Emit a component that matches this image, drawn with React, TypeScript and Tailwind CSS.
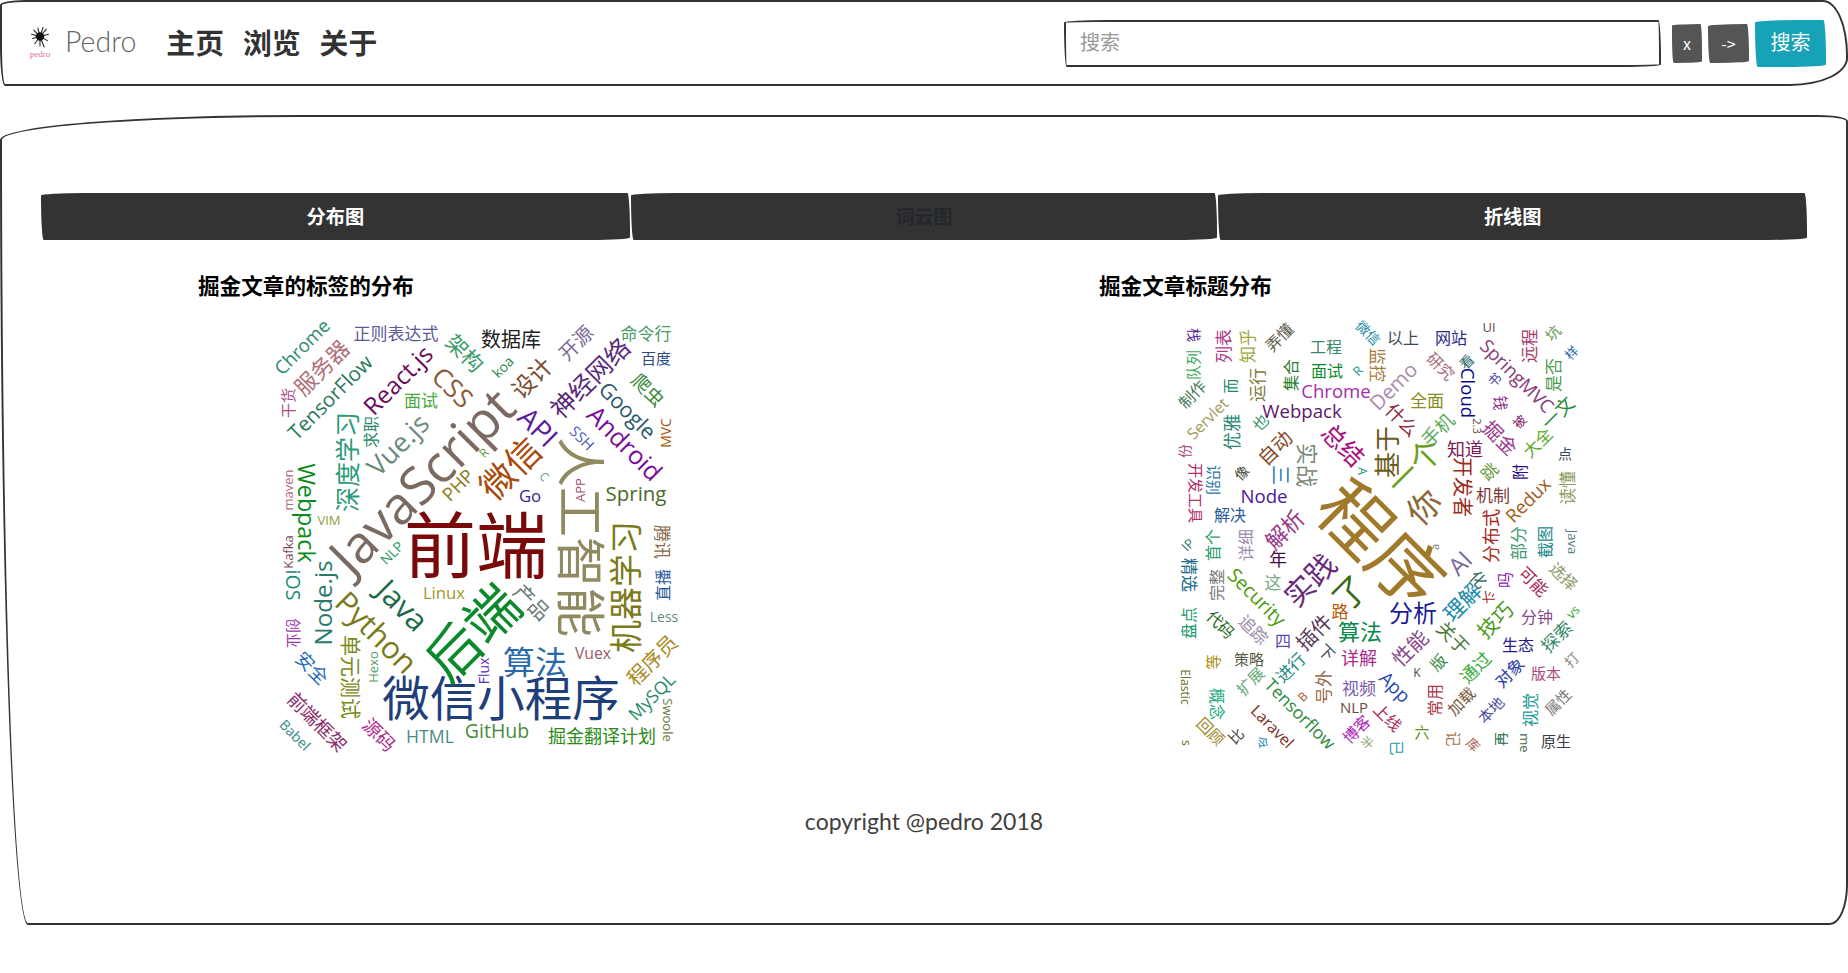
type Word = [string, number, number, number, number, string];

// text, center x, center y (page coords), font size, rotation, colour
const tagWords: Word[] = [
  ['JavaScript', 421, 480, 56, -45, '#7a6a62'],
  ['前端', 476, 544, 72, 0, '#7a0a0a'],
  ['人工智能', 581, 537, 50, 90, '#8f8a5f'],
  ['微信小程序', 501, 698, 47.5, 0, '#1f3f7a'],
  ['后端', 472, 632, 54, -45, '#0a8a2a'],
  ['微信', 510, 468, 38, -45, '#a84a0a'],
  ['机器学习', 625, 587, 33, -90, '#7a7a1a'],
  ['算法', 535, 662, 32, 0, '#2a6aaa'],
  ['Java', 403, 605, 33, 45, '#1a6a4a'],
  ['Python', 377, 632, 33, 45, '#7a7a1a'],
  ['Vue.js', 398, 445, 29, -45, '#6a8a7a'],
  ['React.js', 398, 380, 26, -45, '#6a0a5a'],
  ['CSS', 453, 387, 28, 45, '#8a5a3a'],
  ['API', 538, 427, 30, 45, '#5a1a9a'],
  ['神经网络', 590, 378, 27, -45, '#5a2a7a'],
  ['设计', 532, 378, 25, -45, '#7a4a2a'],
  ['Android', 625, 443, 27, 45, '#7a0a9a'],
  ['Google', 628, 410, 23, 45, '#2a5a6a'],
  ['Node.js', 323, 603, 26, -90, '#2a7a6a'],
  ['Webpack', 306, 513, 25, 90, '#0a8a1a'],
  ['深度学习', 347, 462, 25, -90, '#2a9a7a'],
  ['TensorFlow', 330, 397, 22, -45, '#2a7a5a'],
  ['服务器', 322, 368, 24, -45, '#b0707a'],
  ['Chrome', 302, 347, 20, -45, '#2a8a6a'],
  ['正则表达式', 396, 333, 17, 0, '#5a5a9a'],
  ['架构', 465, 353, 23, 45, '#3a9a6a'],
  ['数据库', 511, 340, 20, 0, '#222222'],
  ['开源', 576, 343, 21, -45, '#7a6a9a'],
  ['命令行', 646, 333, 17, 0, '#4a9a6a'],
  ['百度', 656, 358, 15, 0, '#2a4a8a'],
  ['面试', 421, 400, 17, 0, '#4aaa3a'],
  ['koa', 503, 367, 15, -45, '#2a8a4a'],
  ['爬虫', 648, 390, 20, 45, '#3a8a3a'],
  ['干货', 288, 403, 15, -90, '#b04a8a'],
  ['求职', 371, 432, 16, -90, '#2a8a6a'],
  ['SSH', 582, 438, 16, 45, '#4a5abf'],
  ['MVC', 666, 433, 15, -90, '#a85a0a'],
  ['R', 484, 453, 13, -45, '#6a9a3a'],
  ['PHP', 458, 485, 20, -45, '#8a7a1a'],
  ['C', 544, 477, 13, 45, '#6a9a8a'],
  ['Go', 530, 496, 18, 0, '#3a1a8a'],
  ['APP', 581, 490, 14, -90, '#a84a6a'],
  ['Spring', 636, 493, 22, 0, '#4a6a2a'],
  ['maven', 289, 490, 14, -90, '#b06a7a'],
  ['VIM', 329, 521, 14, 0, '#8aa03a'],
  ['Kafka', 289, 552, 14, -90, '#7a4a5a'],
  ['iOS', 293, 585, 21, 90, '#1a8a7a'],
  ['NLP', 392, 553, 15, -45, '#2a9a6a'],
  ['Linux', 444, 593, 18, 0, '#a09a2a'],
  ['产品', 532, 602, 22, 45, '#6a7a7a'],
  ['腾讯', 662, 542, 17, 90, '#8a6a4a'],
  ['直播', 663, 585, 16, -90, '#2a5a9a'],
  ['Less', 664, 617, 15, 0, '#5a8a7a'],
  ['程序员', 652, 660, 22, -45, '#a88a1a'],
  ['Vuex', 593, 654, 17, 0, '#9a5a6a'],
  ['创业', 293, 633, 15, 90, '#9a3aaa'],
  ['安全', 312, 668, 20, 45, '#2a6aba'],
  ['单元测试', 350, 677, 21, 90, '#7a8a1a'],
  ['Hexo', 374, 667, 14, -90, '#5a9a6a'],
  ['Flux', 484, 671, 15, -90, '#5a2aba'],
  ['MySQL', 652, 697, 19, -45, '#2a8a6a'],
  ['Swoole', 667, 720, 14, 90, '#6a7a3a'],
  ['前端框架', 317, 722, 20, 45, '#8a2a6a'],
  ['Babel', 295, 735, 15, 45, '#3a8a8a'],
  ['源码', 379, 735, 20, 45, '#b02a8a'],
  ['HTML', 430, 737, 19, 0, '#4a8a8a'],
  ['GitHub', 497, 731, 21, 0, '#4a8a3a'],
  ['掘金翻译计划', 602, 736, 18, 0, '#2a8a1a'],
];

const titleWords: Word[] = [
  ['程序', 1382, 543, 72, 45, '#a07a2a'],
  ['一个', 1414, 466, 34, -45, '#6aa01a'],
  ['你', 1424, 507, 36, -45, '#8a6a3a'],
  ['了', 1350, 593, 36, -45, '#3a6a1a'],
  ['实践', 1310, 580, 32, -45, '#6a2a7a'],
  ['基于', 1387, 452, 26, -90, '#6a5a1a'],
  ['总结', 1343, 445, 26, 45, '#aa0a7a'],
  ['AI', 1460, 563, 26, -45, '#7a6a9a'],
  ['理解', 1462, 602, 23, -45, '#1a8aaa'],
  ['解析', 1285, 530, 24, -45, '#9a3a8a'],
  ['分析', 1413, 613, 24, 0, '#1a1a9a'],
  ['算法', 1360, 631, 22, 0, '#0a8a4a'],
  ['插件', 1314, 632, 22, -45, '#5a3a5a'],
  ['技巧', 1495, 620, 22, -45, '#4a9a1a'],
  ['性能', 1410, 648, 22, -45, '#8a4a8a'],
  ['实战', 1308, 465, 22, 90, '#7a8a7a'],
  ['Demo', 1393, 386, 22, -45, '#aa8aaa'],
  ['栈', 1194, 335, 14, 90, '#5a2a9a'],
  ['队列', 1193, 365, 15, -90, '#3aaa5a'],
  ['制作', 1193, 395, 17, -45, '#4a7a5a'],
  ['列表', 1223, 346, 17, -90, '#b03a8a'],
  ['知乎', 1247, 346, 17, -90, '#9aaa3a'],
  ['弄懂', 1280, 338, 17, -45, '#5a5a4a'],
  ['工程', 1326, 347, 16, 0, '#3a8a6a'],
  ['微信', 1368, 333, 15, 45, '#2a8aaa'],
  ['以上', 1403, 338, 16, 0, '#3a4a5a'],
  ['网站', 1451, 338, 16, 0, '#2a2a8a'],
  ['UI', 1489, 328, 14, 0, '#6a4a4a'],
  ['远程', 1529, 346, 17, -90, '#a83a6a'],
  ['坑', 1553, 333, 16, -45, '#5a9a4a'],
  ['样', 1572, 353, 14, -45, '#2a6aaa'],
  ['SpringMVC', 1517, 376, 20, 45, '#8a3a7a'],
  ['是否', 1553, 375, 17, -90, '#4a9a4a'],
  ['集合', 1291, 375, 16, -90, '#2a7a2a'],
  ['面试', 1327, 371, 16, 0, '#0a8a2a'],
  ['运行', 1257, 385, 17, -90, '#7a7a3a'],
  ['而', 1230, 386, 15, -90, '#1a8a6a'],
  ['R', 1358, 371, 14, -45, '#1a9a8a'],
  ['监控', 1377, 365, 17, 90, '#a87a3a'],
  ['研究', 1440, 367, 17, 45, '#a86a7a'],
  ['看', 1467, 362, 15, -45, '#2a6a6a'],
  ['Cloud', 1468, 393, 20, 90, '#0a0a8a'],
  ['书', 1495, 380, 14, -45, '#4a4aaa'],
  ['Chrome', 1336, 391, 20, 0, '#aa2aaa'],
  ['全面', 1427, 400, 17, 0, '#8a8a1a'],
  ['什么', 1402, 420, 20, 45, '#8a2a3a'],
  ['一文', 1558, 413, 20, -45, '#2a8a3a'],
  ['钱', 1500, 403, 15, 90, '#8a2a8a'],
  ['2.3', 1477, 426, 12, 90, '#5a4a4a'],
  ['手机', 1438, 430, 20, -45, '#5aaa5a'],
  ['被', 1520, 422, 14, -45, '#8a1a6a'],
  ['掘金', 1500, 438, 21, 45, '#9a3a8a'],
  ['Webpack', 1302, 411, 20, 0, '#5a1a6a'],
  ['Servlet', 1208, 419, 17, -45, '#a09a5a'],
  ['优雅', 1232, 432, 18, -90, '#2a8a7a'],
  ['也', 1261, 423, 17, -45, '#3a9a6a'],
  ['自动', 1275, 448, 21, -45, '#8a4a2a'],
  ['知道', 1465, 449, 18, 0, '#7a1a5a'],
  ['大全', 1538, 443, 18, -45, '#5aaa2a'],
  ['点', 1565, 454, 14, 0, '#3a4a5a'],
  ['份', 1185, 451, 14, -90, '#a84a7a'],
  ['开发工具', 1195, 493, 15, 90, '#b0306a'],
  ['识别', 1213, 480, 15, 90, '#2a7aaa'],
  ['像', 1242, 473, 15, -45, '#4a4a3a'],
  ['三', 1280, 475, 20, 90, '#2a7aba'],
  ['Node', 1264, 496, 20, 0, '#4a1a9a'],
  ['开发者', 1462, 487, 20, 90, '#9a2a1a'],
  ['跳', 1490, 472, 18, -45, '#6a9a3a'],
  ['附', 1520, 472, 16, -90, '#2a0a8a'],
  ['读懂', 1567, 488, 17, -90, '#8a9a5a'],
  ['Redux', 1528, 500, 20, -45, '#a85a1a'],
  ['机制', 1493, 495, 17, 0, '#7a3a3a'],
  ['解决', 1230, 515, 16, 0, '#2a5a9a'],
  ['A', 1362, 471, 13, 90, '#1a9a7a'],
  ['分布式', 1491, 536, 18, -90, '#aa2a1a'],
  ['首个', 1213, 545, 16, -90, '#2a9a6a'],
  ['IP', 1188, 545, 14, -45, '#1a7a6a'],
  ['详细', 1246, 545, 16, -90, '#a08ab0'],
  ['年', 1278, 559, 18, 0, '#4a0a4a'],
  ['a', 1435, 547, 12, -90, '#777777'],
  ['部分', 1518, 543, 17, -90, '#3a9a6a'],
  ['截图', 1545, 542, 16, -90, '#1a8a8a'],
  ['Java', 1572, 542, 14, 90, '#4a7a7a'],
  ['精选', 1189, 575, 17, 90, '#1a6a8a'],
  ['完整', 1217, 585, 16, -90, '#7a7a7a'],
  ['这', 1273, 582, 17, 0, '#7aaa7a'],
  ['化', 1478, 580, 18, 45, '#2a6a5a'],
  ['吗', 1505, 580, 16, -90, '#8a1aaa'],
  ['可能', 1533, 582, 18, 45, '#aa2a5a'],
  ['选择', 1563, 577, 17, 45, '#8a9a6a'],
  ['Security', 1257, 597, 21, 45, '#4a9a0a'],
  ['斗', 1489, 597, 14, 90, '#aa2a2a'],
  ['路', 1340, 611, 17, 0, '#b85a0a'],
  ['盘点', 1189, 623, 16, -90, '#1a9a6a'],
  ['代码', 1220, 625, 17, 45, '#1a6a1a'],
  ['追踪', 1253, 630, 18, 45, '#9a8aaa'],
  ['分钟', 1537, 617, 16, 0, '#8a4a8a'],
  ['vs', 1573, 612, 14, -45, '#2aaa2a'],
  ['探索', 1557, 637, 19, -45, '#3a8a6a'],
  ['四', 1283, 641, 16, 0, '#5a4aaa'],
  ['关于', 1453, 638, 20, 45, '#4a7a3a'],
  ['生态', 1518, 645, 16, 0, '#2a1a8a'],
  ['下', 1326, 653, 17, 45, '#3a4a5a'],
  ['详解', 1359, 658, 18, 0, '#aa2a8a'],
  ['策略', 1249, 659, 15, 0, '#5a5a4a'],
  ['等', 1213, 662, 15, -90, '#aa8a0a'],
  ['进行', 1291, 668, 18, -45, '#1a8a7a'],
  ['通过', 1476, 668, 19, -45, '#3aaa3a'],
  ['版', 1439, 663, 17, -45, '#3a8a4a'],
  ['打', 1572, 660, 15, -45, '#8a8a7a'],
  ['对象', 1510, 673, 18, -45, '#2a3aaa'],
  ['版本', 1546, 673, 15, 0, '#aa4a7a'],
  ['K', 1417, 673, 13, 0, '#4a4a4a'],
  ['Elastic', 1185, 687, 13, 90, '#6a6a2a'],
  ['扩展', 1251, 682, 17, -45, '#6aaa7a'],
  ['号外', 1323, 687, 17, -90, '#9a6a4a'],
  ['视频', 1359, 688, 17, 0, '#7a5aaa'],
  ['App', 1395, 687, 20, 45, '#2a4aaa'],
  ['常用', 1435, 700, 16, -90, '#a83a4a'],
  ['加载', 1462, 702, 17, -45, '#7a5a3a'],
  ['属性', 1558, 702, 16, -45, '#7a7a7a'],
  ['概念', 1217, 704, 16, 90, '#1aaa7a'],
  ['B', 1303, 697, 13, -45, '#aa5a1a'],
  ['Tensorflow', 1300, 714, 19, 45, '#2a8a3a'],
  ['NLP', 1354, 707, 16, 0, '#6a4a3a'],
  ['本地', 1491, 710, 16, -45, '#4a4a9a'],
  ['视觉', 1530, 710, 17, -90, '#1a9a9a'],
  ['上线', 1387, 718, 17, 45, '#aa2a5a'],
  ['Laravel', 1272, 727, 17, 45, '#7a2a1a'],
  ['回顾', 1210, 732, 17, 45, '#a08a2a'],
  ['博客', 1357, 730, 17, -45, '#aa2aba'],
  ['六', 1422, 732, 15, 0, '#5a9a1a'],
  ['记', 1453, 739, 15, 90, '#a87a4a'],
  ['比', 1236, 736, 16, -45, '#4a4a4a'],
  ['令', 1262, 743, 14, 45, '#2a8aba'],
  ['半', 1368, 743, 14, -45, '#8aaa7a'],
  ['已', 1396, 748, 15, 90, '#2a9aaa'],
  ['库', 1473, 745, 14, 45, '#aa5a5a'],
  ['再', 1501, 739, 14, -90, '#1a6a4a'],
  ['me', 1524, 743, 14, 90, '#4a6a4a'],
  ['原生', 1556, 741, 15, 0, '#3a3a4a'],
  ['s', 1186, 743, 13, 90, '#6a6a1a'],
];

const isLatin = (text: string) => /^[\x20-\x7e]+$/.test(text);

// my size guesses came out a bit large on the diagonal CJK words
const fontSizeOf = (text: string, size: number, rotate: number) => {
  if (isLatin(text)) return size * 0.93;
  if (Math.abs(rotate) === 45 && size < 50) return size * 0.93;
  return size;
};

const WordCloud = ({ words, originX }: { words: Word[]; originX: number }) => (
  <div className="relative w-[420px] h-[420px] ml-[72px] mt-[19px] font-['Open_Sans','Noto_Sans_CJK_SC',sans-serif]">
    {words.map(([text, x, y, size, rotate, color]) => (
      <span
        key={`${text}-${x}`}
        className="absolute whitespace-nowrap leading-none"
        style={{
          left: x - originX,
          top: y - 320,
          fontSize: fontSizeOf(text, size, rotate),
          color,
          transform: `translate(-50%, -50%) rotate(${rotate}deg)`,
        }}
      >
        {text}
      </span>
    ))}
  </div>
);

const Logo = () => (
  <div className="flex flex-col items-center w-[22px]">
    <svg width="20" height="21" viewBox="0 0 18 20">
      <g stroke="#222" strokeWidth="1" strokeLinecap="round">
        <path d="M9 9 L3 3 M9 9 L7 1 M9 9 L12 0 M9 9 L15 2 M9 9 L17 7 M9 9 L16 13 M9 9 L13 19 M9 9 L9 18 M9 9 L4 16 M9 9 L2 11 M9 9 L1 7" />
      </g>
      <circle cx="9" cy="9" r="4" fill="#111" />
    </svg>
    <span className="text-[9px] leading-none mt-[2px] text-[#d9708a] font-['Liberation_Serif',serif]">pedro</span>
  </div>
);

const App = () => {
  return (
    <div className="w-[1848px] h-[973px] overflow-hidden bg-white text-[#41403e] font-['Noto_Sans_CJK_SC',sans-serif]">
      <nav className="h-[86px] flex items-center pl-[27px] pr-[20px] border-2 border-[#333] bg-white rounded-[25px_25px_58px_5px/5px_55px_28px_40px]">
        <Logo />
        <span className="ml-[14px] pb-[3px] text-[28.5px] font-light text-[#666] font-['Lato',sans-serif]">Pedro</span>
        <div className="ml-[30px] pb-[2px] flex items-center gap-[19px] text-[28.8px] font-bold text-[#333]">
          <a href="#">主页</a>
          <a href="#">浏览</a>
          <a href="#">关于</a>
        </div>
        <div className="ml-auto flex items-center">
          <input
            placeholder="搜索"
            className="w-[597px] h-[47px] pl-[14px] pb-[3px] text-[20px] bg-white border-2 border-[#333] outline-none placeholder:text-[#999] rounded-[255px_15px_225px_15px/15px_225px_15px_255px]"
          />
          <button className="ml-[11px] w-[30px] h-[39px] text-[16px] text-white bg-[#555] rounded-[255px_15px_225px_15px/15px_225px_15px_255px]">x</button>
          <button className="ml-[6px] w-[41px] h-[39px] text-[16px] text-white bg-[#555] rounded-[255px_15px_225px_15px/15px_225px_15px_255px]">-&gt;</button>
          <button className="ml-[6px] w-[71px] h-[47px] pb-[2px] text-[20px] text-white bg-[#17a2b8] rounded-[255px_15px_225px_15px/15px_225px_15px_255px]">搜索</button>
        </div>
      </nav>

      <main className="mt-[29px] h-[810px] pt-[76px] px-[39px] border-2 border-[#333] bg-white rounded-[300px_30px_18px_28px/25px_6px_40px_780px]">
        <div className="flex">
          <button className="w-[589px] h-[47px] text-[19.2px] font-bold text-white bg-[#333] rounded-[255px_15px_225px_15px/15px_225px_15px_255px]">分布图</button>
          <button className="ml-[1px] w-[587px] h-[47px] text-[19.2px] font-bold text-[#23272b] bg-[#333] rounded-[255px_15px_225px_15px/15px_225px_15px_255px]">词云图</button>
          <button className="ml-[1px] w-[589px] h-[47px] text-[19.2px] font-bold text-white bg-[#333] rounded-[255px_15px_225px_15px/15px_225px_15px_255px]">折线图</button>
        </div>

        <div className="flex pl-[157px] pt-[29px]">
          <section className="w-[901px]">
            <h3 className="text-[21.6px] leading-[32px] font-bold text-black">掘金文章的标签的分布</h3>
            <WordCloud words={tagWords} originX={270} />
          </section>
          <section className="w-[701px]">
            <h3 className="text-[21.6px] leading-[32px] font-bold text-black">掘金文章标题分布</h3>
            <WordCloud words={titleWords} originX={1171} />
          </section>
        </div>

        <p className="mt-[66px] text-center text-[23px] leading-[30px] text-[#41403e] font-['Lato',sans-serif]">copyright @pedro 2018</p>
      </main>
    </div>
  );
};

export default App;
